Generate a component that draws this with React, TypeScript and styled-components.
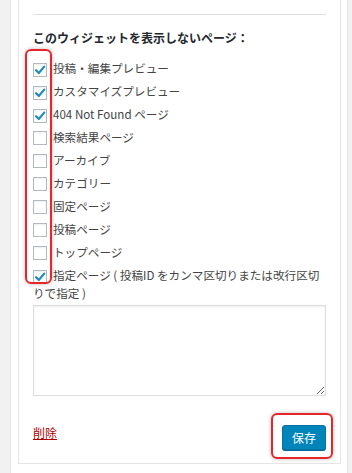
import React from 'react'
import styled, { createGlobalStyle } from 'styled-components'

const GlobalStyle = createGlobalStyle`
  html, body {
    margin: 0;
    padding: 0;
    background: #f1f1f1;
  }
  body {
    font-family: "Noto Sans CJK JP", "Noto Sans", sans-serif;
    font-size: 12px;
    color: #444;
  }
`

const pages = [
  { label: '投稿・編集プレビュー', checked: true },
  { label: 'カスタマイズプレビュー', checked: true },
  { label: '404 Not Found ページ', checked: true },
  { label: '検索結果ページ', checked: false },
  { label: 'アーカイブ', checked: false },
  { label: 'カテゴリー', checked: false },
  { label: '固定ページ', checked: false },
  { label: '投稿ページ', checked: false },
  { label: 'トップページ', checked: false },
  { label: '指定ページ ( 投稿ID をカンマ区切りまたは改行区切りで指定 )', checked: true },
]

const CheckBox = ({ checked }: { checked: boolean }) => (
  <Box>
    {checked && (
      <svg width="12" height="12" viewBox="0 0 12 12">
        <path d="M2 6.2 L4.8 9 L10.2 2.6" fill="none" stroke="#1e8cbe" strokeWidth="2.2" strokeLinecap="round" strokeLinejoin="round" />
      </svg>
    )}
  </Box>
)

const App = () => {
  return (
    <>
      <GlobalStyle />
      <Panel>
        <Widget>
          <Divider />
          <Heading>このウィジェットを表示しないページ：</Heading>
          <List>
            <Marker $top={-7} $left={-8} $width={27} $height={235} />
            {pages.map((p) => (
              <Row key={p.label}>
                <CheckBox checked={p.checked} />
                {p.label}
              </Row>
            ))}
          </List>
          <Ids />
          <Footer>
            <DeleteLink href="#">削除</DeleteLink>
            <SaveWrap>
              <Marker $top={-12} $left={-11} $width={62} $height={46} />
              <SaveButton>保存</SaveButton>
            </SaveWrap>
          </Footer>
        </Widget>
      </Panel>
    </>
  )
}

export const Panel = styled.div`
  margin-left: 10px;
  width: 338px;
  box-sizing: border-box;
  min-height: 100vh;
  background: #fff;
  border-left: 1px solid #e5e5e5;
  border-right: 1px solid #e5e5e5;
  padding: 0 6px 10px 7px;
`
export const Widget = styled.div`
  border: 1px solid #e5e5e5;
  border-top: none;
  padding: 14px 14px 13px;
`
export const Divider = styled.div`
  border-top: 1px solid #e1e1e1;
`
export const Heading = styled.div`
  margin-top: 14px;
  line-height: 18px;
  font-weight: 700;
  font-size: 12px;
  color: #23282d;
`
export const List = styled.div`
  position: relative;
  margin-top: 9px;
`
export const Marker = styled.div<{ $top: number; $left: number; $width: number; $height: number }>`
  position: absolute;
  top: ${(p) => p.$top}px;
  left: ${(p) => p.$left}px;
  width: ${(p) => p.$width}px;
  height: ${(p) => p.$height}px;
  box-sizing: border-box;
  border: 2px solid #e8262a;
  border-radius: 6px;
  box-shadow: 0 0 4px rgba(0, 0, 0, 0.25);
  pointer-events: none;
`
export const Row = styled.div`
  padding: 3px 0 2px;
  line-height: 18px;
  font-size: 11.6px;
  color: #444;
`
export const Box = styled.span`
  display: inline-flex;
  align-items: center;
  justify-content: center;
  width: 14px;
  height: 14px;
  box-sizing: border-box;
  margin-right: 6px;
  vertical-align: -3px;
  border: 1px solid #b4b9be;
  background: #fff;
  box-shadow: inset 0 1px 2px rgba(0, 0, 0, 0.07);
`
export const Ids = styled.textarea`
  display: block;
  width: 293px;
  height: 91px;
  box-sizing: border-box;
  margin: 1px 0 0;
  border: 1px solid #ddd;
  box-shadow: inset 0 1px 2px rgba(0, 0, 0, 0.07);
  resize: vertical;
  font-family: inherit;
`
export const Footer = styled.div`
  display: flex;
  justify-content: space-between;
  align-items: flex-start;
  margin-top: 29px;
`
export const DeleteLink = styled.a`
  line-height: 16px;
  color: #a00;
  text-decoration: underline;
`
export const SaveWrap = styled.div`
  position: relative;
`
export const SaveButton = styled.button`
  display: block;
  height: 25px;
  padding: 0 9px;
  border: 1px solid #0073aa;
  border-radius: 3px;
  background: #0085ba;
  box-shadow: 0 1px 0 #006799;
  color: #fff;
  font-family: inherit;
  font-size: 12px;
`

export default App
